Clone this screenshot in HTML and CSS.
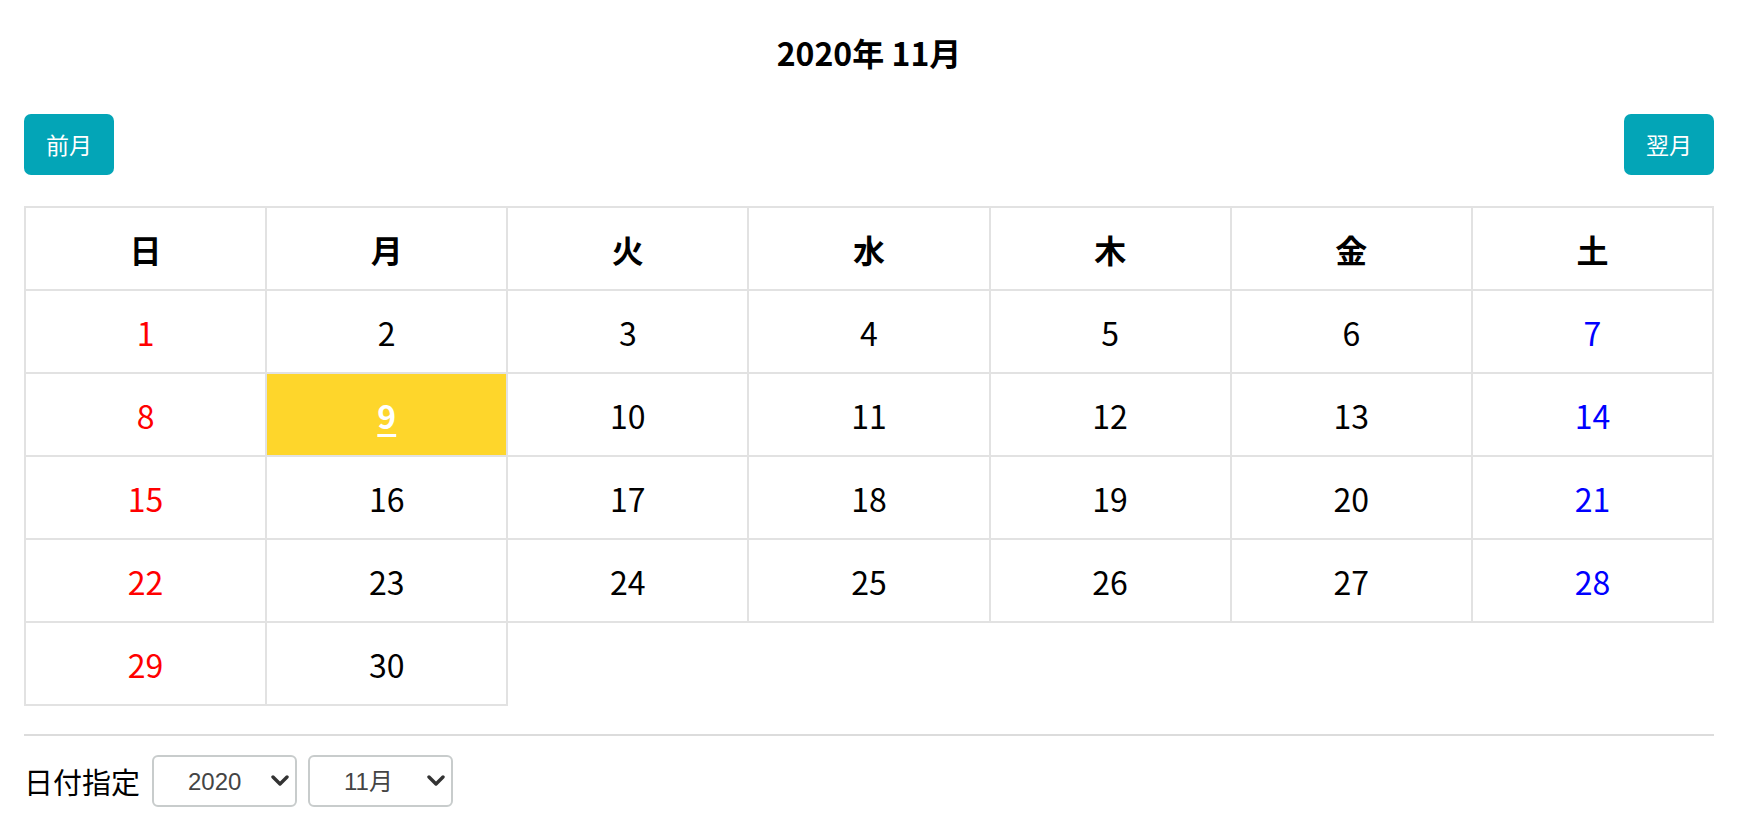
FILE: index.html
```html
<!DOCTYPE html>
<html lang="ja">
<head>
    <meta charset="UTF-8">
    <meta name="viewport" content="width=device-width, initial-scale=1.0">
    <title>カレンダー</title>
    <link rel="stylesheet" href="styles.css">
</head>
<body>
    <div class="container">
        <!-- Month header -->
        <h1 class="month-title">2020年 11月</h1>
        <div class="month-nav">
            <button class="nav-btn">前月</button>
            <button class="nav-btn">翌月</button>
        </div>

        <!-- Calendar -->
        <table class="calendar">
            <thead>
                <tr>
                    <th>日</th><th>月</th><th>火</th><th>水</th><th>木</th><th>金</th><th>土</th>
                </tr>
            </thead>
            <tbody>
                <tr>
                    <td class="sun">1</td><td>2</td><td>3</td><td>4</td><td>5</td><td>6</td><td class="sat">7</td>
                </tr>
                <tr>
                    <td class="sun">8</td><td class="today"><a href="#">9</a></td><td>10</td><td>11</td><td>12</td><td>13</td><td class="sat">14</td>
                </tr>
                <tr>
                    <td class="sun">15</td><td>16</td><td>17</td><td>18</td><td>19</td><td>20</td><td class="sat">21</td>
                </tr>
                <tr>
                    <td class="sun">22</td><td>23</td><td>24</td><td>25</td><td>26</td><td>27</td><td class="sat">28</td>
                </tr>
                <tr>
                    <td class="sun">29</td><td>30</td>
                </tr>
            </tbody>
        </table>

        <hr class="divider">

        <!-- Date picker -->
        <div class="date-picker">
            <span class="picker-label">日付指定</span>
            <span class="select-wrap">
                <select class="picker-select">
                    <option>2019</option>
                    <option selected>2020</option>
                    <option>2021</option>
                </select>
                <svg class="chevron" viewBox="0 0 18 11"><path d="M2 2l7 7 7-7" fill="none" stroke="#333" stroke-width="3.4" stroke-linecap="round" stroke-linejoin="round"/></svg>
            </span>
            <span class="select-wrap">
                <select class="picker-select">
                    <option>10月</option>
                    <option selected>11月</option>
                    <option>12月</option>
                </select>
                <svg class="chevron" viewBox="0 0 18 11"><path d="M2 2l7 7 7-7" fill="none" stroke="#333" stroke-width="3.4" stroke-linecap="round" stroke-linejoin="round"/></svg>
            </span>
        </div>
    </div>
</body>
</html>
```

FILE: styles.css
```css
body {
    font-family: "Noto Sans CJK JP", sans-serif;
    margin: 0;
    padding: 0;
    background: #fff;
    color: #000;
}
.container {
    padding: 0 24px;
}
.month-title {
    margin: 0;
    padding-top: 30px;
    font-size: 32px;
    line-height: 45px;
    font-weight: bold;
    text-align: center;
}
.month-nav {
    display: flex;
    justify-content: space-between;
    margin-top: 39px;
}
.nav-btn {
    font-family: "Noto Sans CJK JP", sans-serif;
    background: #03a5b7;
    color: #fff;
    border: none;
    border-radius: 7px;
    font-size: 23px;
    line-height: 33px;
    padding: 14px 22px;
    cursor: pointer;
}
.calendar {
    width: 100%;
    margin-top: 31px;
    border-collapse: collapse;
    table-layout: fixed;
}
.calendar th,
.calendar td {
    border: 2px solid #e2e2e2;
    height: 81px;
    padding: 0;
    text-align: center;
    font-size: 32px;
}
.calendar th {
    font-weight: bold;
}
.calendar td {
    font-weight: normal;
}
.calendar .sun {
    color: #ff0000;
}
.calendar .sat {
    color: #0000ff;
}
.calendar .today {
    background: #fed62b;
}
.calendar .today a {
    color: #fff;
    font-weight: bold;
    text-decoration: underline;
    text-underline-offset: 5px;
    text-decoration-thickness: 3px;
}
.divider {
    border: 0;
    border-top: 2px solid #dcdcdc;
    margin: 28px 0 19px;
}
.date-picker {
    display: flex;
    align-items: center;
}
.picker-label {
    font-size: 29px;
    margin-right: 12px;
}
.select-wrap {
    position: relative;
    margin-right: 11px;
}
.picker-select {
    appearance: none;
    -webkit-appearance: none;
    width: 145px;
    height: 52px;
    border: 2px solid #c8cccc;
    border-radius: 6px;
    background: #fff;
    color: #444;
    font-family: "Liberation Sans", "Noto Sans CJK JP", sans-serif;
    font-size: 24px;
    padding: 0 0 0 34px;
}
.chevron {
    position: absolute;
    right: 8px;
    top: 20px;
    width: 18px;
    height: 11px;
    pointer-events: none;
}
```
